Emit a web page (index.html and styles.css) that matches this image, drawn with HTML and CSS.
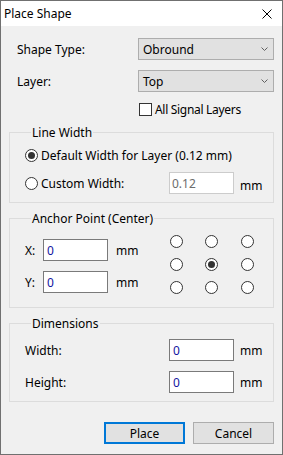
FILE: index.html
```html
<!DOCTYPE html>
<html lang="en">
<head>
    <title>Place Shape</title>
    <link rel="stylesheet" href="styles.css">
</head>
<body>
    <div class="window">
        <div class="titlebar">
            <span class="title">Place Shape</span>
            <svg class="close" width="10" height="10" viewBox="0 0 10 10">
                <path d="M0.5 0.5 L9.5 9.5 M9.5 0.5 L0.5 9.5" stroke="#000" stroke-width="1" fill="none"/>
            </svg>
        </div>

        <div class="content">
            <div class="top-form">
                <span class="label">Shape Type:</span>
                <div class="combo">
                    <span>Obround</span>
                    <svg class="chevron" width="7" height="4" viewBox="0 0 7 4">
                        <path d="M0.5 0.5 L3.5 3.5 L6.5 0.5" stroke="#606060" stroke-width="1" fill="none"/>
                    </svg>
                </div>
                <span class="label">Layer:</span>
                <div class="combo">
                    <span>Top</span>
                    <svg class="chevron" width="7" height="4" viewBox="0 0 7 4">
                        <path d="M0.5 0.5 L3.5 3.5 L6.5 0.5" stroke="#606060" stroke-width="1" fill="none"/>
                    </svg>
                </div>
                <span></span>
                <div class="check-row">
                    <span class="checkbox"></span>
                    <span class="tight">All Signal Layers</span>
                </div>
            </div>

            <fieldset class="group line-width">
                <legend>Line Width</legend>
                <div class="radio-row first">
                    <span class="radio on"></span>
                    <span>Default Width for Layer (0.12 mm)</span>
                </div>
                <div class="radio-row">
                    <span class="radio"></span>
                    <span class="radio-label">Custom Width:</span>
                    <span class="field disabled">0.12</span>
                    <span class="unit low">mm</span>
                </div>
            </fieldset>

            <fieldset class="group anchor">
                <legend>Anchor Point (Center)</legend>
                <div class="anchor-body">
                    <div class="coords">
                        <div class="coord-row">
                            <span class="coord-label">X:</span>
                            <span class="field">0</span>
                            <span class="unit near">mm</span>
                        </div>
                        <div class="coord-row">
                            <span class="coord-label">Y:</span>
                            <span class="field">0</span>
                            <span class="unit near">mm</span>
                        </div>
                    </div>
                    <div class="anchor-grid">
                        <span class="radio"></span>
                        <span class="radio"></span>
                        <span class="radio"></span>
                        <span class="radio"></span>
                        <span class="radio on"></span>
                        <span class="radio"></span>
                        <span class="radio"></span>
                        <span class="radio"></span>
                        <span class="radio"></span>
                    </div>
                </div>
            </fieldset>

            <fieldset class="group dimensions">
                <legend>Dimensions</legend>
                <div class="dim-row">
                    <span class="dim-label">Width:</span>
                    <span class="field">0</span>
                    <span class="unit">mm</span>
                </div>
                <div class="dim-row">
                    <span class="dim-label">Height:</span>
                    <span class="field">0</span>
                    <span class="unit">mm</span>
                </div>
            </fieldset>

            <div class="buttons">
                <button class="button default">Place</button>
                <button class="button">Cancel</button>
            </div>
        </div>
    </div>
</body>
</html>
```

FILE: styles.css
```css
body {
    margin: 0;
    padding: 0;
    background-color: #f0f0f0;
    font-family: "Noto Sans", "Open Sans", sans-serif;
    font-size: 12px;
    color: #000;
}

.window {
    width: 283px;
    height: 455px;
    box-sizing: border-box;
    border: 1px solid #707070;
    background-color: #f0f0f0;
}

.titlebar {
    height: 25px;
    background-color: #fff;
    display: flex;
    align-items: center;
    justify-content: space-between;
    padding: 0 10px 0 3px;
}

.content {
    padding: 0 8px;
}

.top-form {
    display: grid;
    grid-template-columns: 121px 136px;
    grid-template-rows: 22px 22px 15px;
    row-gap: 10px;
    margin-top: 12px;
    padding-left: 8px;
    align-items: center;
}

.combo {
    height: 22px;
    box-sizing: border-box;
    border: 1px solid #adadad;
    background-color: #e1e1e1;
    display: flex;
    align-items: center;
    justify-content: space-between;
    padding: 0 5px 0 4px;
}

.check-row {
    display: flex;
    align-items: center;
    gap: 3px;
    margin-left: 1px;
}

.tight {
    letter-spacing: -0.3px;
}

.checkbox {
    width: 13px;
    height: 13px;
    box-sizing: border-box;
    border: 1px solid #333;
    background-color: #fff;
}

.group {
    margin: 8px 0 0 0;
    padding: 0 0 8px 15px;
    border: 1px solid #dcdcdc;
    min-inline-size: 0;
}

.group legend {
    margin-left: 6px;
    padding: 0 1px;
    line-height: 15px;
}

.radio {
    width: 13px;
    height: 13px;
    box-sizing: border-box;
    border: 1px solid #333;
    border-radius: 50%;
    background-color: #fff;
    display: flex;
    align-items: center;
    justify-content: center;
}

.radio.on::after {
    content: "";
    width: 7px;
    height: 7px;
    border-radius: 50%;
    background-color: #333;
}

.radio-row {
    display: flex;
    align-items: center;
    gap: 3px;
    height: 22px;
}

.radio-row.first {
    height: 16px;
    margin-top: 7px;
    margin-bottom: 9px;
}

.radio-label {
    width: 125px;
}

.field {
    width: 65px;
    height: 22px;
    box-sizing: border-box;
    border: 1px solid #7a7a7a;
    background-color: #fff;
    color: #1414a0;
    padding-left: 3px;
    display: flex;
    align-items: center;
}

.field.disabled {
    border-color: #cccccc;
    color: #6d6d6d;
    padding-left: 2px;
}

.unit {
    margin-left: 6px;
}

.unit.low {
    margin-left: 3px;
    padding-top: 4px;
}

.unit.near {
    margin-left: 8px;
}

.anchor .anchor-body {
    display: flex;
    padding-top: 9px;
    padding-bottom: 5px;
}

.coords {
    width: 145px;
    margin-top: 4px;
    display: flex;
    flex-direction: column;
    gap: 10px;
}

.coord-row,
.dim-row {
    display: flex;
    align-items: center;
    height: 22px;
}

.coord-label {
    width: 18px;
}

.anchor-grid {
    display: grid;
    grid-template-columns: 35px 36px 13px;
    grid-template-rows: 13px 13px 13px;
    row-gap: 10px;
}

.dimensions {
    padding-top: 8px;
}

.dim-row + .dim-row {
    margin-top: 10px;
}

.dim-label {
    width: 144px;
}

.buttons {
    display: flex;
    justify-content: flex-end;
    gap: 8px;
    margin-top: 20px;
}

.button {
    width: 81px;
    height: 22px;
    box-sizing: border-box;
    border: 1px solid #adadad;
    background-color: #e1e1e1;
    font-family: inherit;
    font-size: 12px;
    color: #000;
    padding: 0;
}

.button.default {
    border: 2px solid #0078d7;
}
```
